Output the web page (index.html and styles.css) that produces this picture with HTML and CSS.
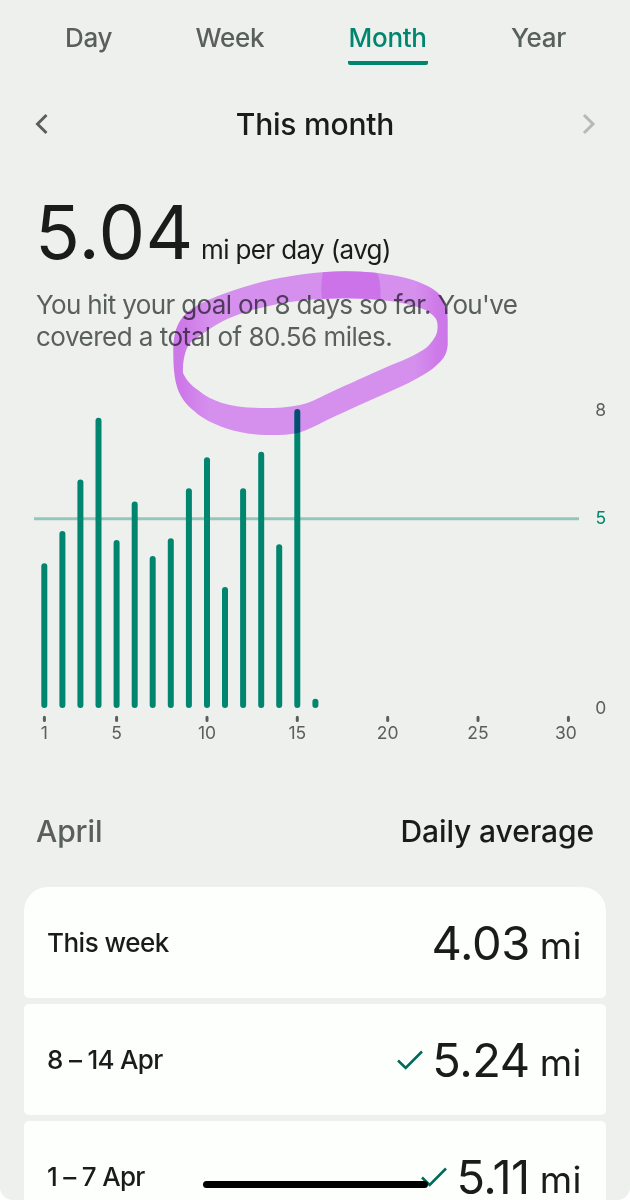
FILE: index.html
```html
<!DOCTYPE html>
<html lang="en">
    <head>
        <meta charset="utf-8">
        <title>Distance</title>
        <link rel="stylesheet" href="styles.css">
    </head>
    <body>
        <div class="page">
            <nav class="tabs">
                <a class="tab">Day</a>
                <a class="tab">Week</a>
                <a class="tab active">Month</a>
                <a class="tab">Year</a>
            </nav>

            <div class="period">
                <svg class="arrow" width="14" height="22" viewBox="0 0 14 22"><path d="M12.5 2 L3.5 11 L12.5 20"/></svg>
                <h1 class="period-title">This month</h1>
                <svg class="arrow next" width="14" height="22" viewBox="0 0 14 22"><path d="M2 2 L11 11 L2 20"/></svg>
            </div>

            <div class="average">
                <span class="average-value">5.04</span>
                <span class="average-unit">mi per day (avg)</span>
            </div>
            <p class="summary">You hit your goal on 8 days so far. You've<br><span class="second">covered a total of 80.56 miles.</span></p>

            <svg class="chart" width="630" height="360" viewBox="0 400 630 360">
                <path class="goal" d="M34 518.7H579"/>
                <g class="bars">
                    <path d="M44.3 566.3V705"/>
                    <path d="M62.4 534V705"/>
                    <path d="M80.4 482.5V705"/>
                    <path d="M98.5 420.7V705"/>
                    <path d="M116.6 543V705"/>
                    <path d="M134.7 504.5V705"/>
                    <path d="M152.7 559V705"/>
                    <path d="M170.8 541.3V705"/>
                    <path d="M188.9 491.3V705"/>
                    <path d="M207 460.3V705"/>
                    <path d="M225 590V705"/>
                    <path d="M243.1 491.3V705"/>
                    <path d="M261.2 454.7V705"/>
                    <path d="M279.2 547.3V705"/>
                    <path d="M297.3 412V705"/>
                    <path d="M315.4 701.7V705"/>
                </g>
                <path class="ticks" d="M44.4 717.3v3.2M116.6 717.3v3.2M207 717.3v3.2M297.3 717.3v3.2M387.7 717.3v3.2M478 717.3v3.2M568.4 717.3v3.2"/>
                <g class="labels">
                    <text x="44.3" y="738.7">1</text>
                    <text x="116.6" y="738.7">5</text>
                    <text x="207" y="738.7">10</text>
                    <text x="297.3" y="738.7">15</text>
                    <text x="387.7" y="738.7">20</text>
                    <text x="478" y="738.7">25</text>
                    <text x="566" y="738.7">30</text>
                    <text x="600.7" y="415.5">8</text>
                    <text x="600.7" y="524" class="goal-label">5</text>
                    <text x="600.7" y="713.7">0</text>
                </g>
            </svg>

            <div class="list-head">
                <h2 class="april">April</h2>
                <h2>Daily average</h2>
            </div>

            <div class="list">
                <div class="row">
                    <span class="row-label">This week</span>
                    <span class="row-value">4.03</span>
                    <span class="row-unit">mi</span>
                </div>
                <div class="row">
                    <span class="row-label dates">8 – 14 Apr</span>
                    <svg class="check" width="26" height="20" viewBox="0 0 26 20"><path d="M1 10.5 L8.7 18 L25 1.5"/></svg>
                    <span class="row-value">5.24</span>
                    <span class="row-unit">mi</span>
                </div>
                <div class="row">
                    <span class="row-label dates">1 – 7 Apr</span>
                    <svg class="check" width="26" height="20" viewBox="0 0 26 20"><path d="M1 10.5 L8.7 18 L25 1.5"/></svg>
                    <span class="row-value">5.11</span>
                    <span class="row-unit">mi</span>
                </div>
            </div>

            <!-- highlighter loop over the summary -->
            <svg class="marker" width="630" height="450" viewBox="0 0 630 450">
                <defs>
                    <linearGradient id="ink" gradientUnits="userSpaceOnUse" x1="173" y1="0" x2="448" y2="0">
                        <stop offset="0" stop-color="#db7dfa"/>
                        <stop offset="0.04" stop-color="#dd82fb"/>
                        <stop offset="0.13" stop-color="#e598ff"/>
                        <stop offset="0.88" stop-color="#e598ff"/>
                        <stop offset="0.96" stop-color="#dd82fb"/>
                        <stop offset="1" stop-color="#db7dfa"/>
                    </linearGradient>
                </defs>
                <path fill="url(#ink)" fill-rule="evenodd" d="M173.3 352 C173.3 338 175 327 182 318 C188 310 197 305 208 300 C240 286 282 275 325 272 C340 271 354 271 367 272 C384 273.5 400 276 413 280 C425 284 435 289 440 295 C446 303 448 312 447.7 322 V345 C447 352 445 357 440 362 C435 367 430 371 423 375 C416 379 409 383 400 387 C375 398 348 410 326 420.5 C316 425.5 308 430 298 433 C287 435 276 435.3 265 435 C250 434.7 237 432 225 428 C214 424 203 419 195 411.7 C185 404 179 395 176.5 385 C174 376 173.3 364 173.3 352Z
                M183 373 C182.5 364 184 355 187 348 C189 343 193 340 198 337 C208 330 219 322 232 317 C252 309 274 304 298 301 C321 298 345 297.5 367 299 C383 300 397 301.5 410 305 C418 307 425 309 430 313 C434 316 437 319 437.3 323 C438 328 437.5 333 435 337 C432 342 428 347 423 350 C411 358 395 363 380 370 C360 379 343 386.5 326 394.5 C317 399 309 403 300 405 C288 407.5 277 408 265 408 C250 408 235 407 222 403 C213 400 205 396 198 390 C192 386 186 380 183 373Z"/>
                <path class="overlap" d="M323 272.2 Q350 270 377 273 Q381 280 380.5 299.8 Q350 297.3 322 299 Q320 286 323 272.2Z"/>
            </svg>
            <div class="home-bar"></div>
        </div>
    </body>
</html>
```
FILE: styles.css
```css
html{
    background: white;
}
body{
    margin: 0;
    font-family: Inter, "Liberation Sans", sans-serif;
    color: #191c1a;
}
.page{
    position: relative;
    height: 1200px;
    overflow: hidden;
    background: #eef0ed;
    border-radius: 0 0 13px 13px;
}

.tabs{
    display: flex;
    justify-content: space-between;
    height: 66px;
    padding: 0 64px 0 65px;
    box-sizing: border-box;
    font-size: 26px;
    font-weight: 500;
    line-height: 75px;
    color: #59605c;
}
.tab{
    height: 66px;
    white-space: nowrap;
    letter-spacing: -0.3px;
}
.active{
    height: 61px;
    padding: 0 1px;
    color: #00866f;
    border-bottom: solid 4px #00866f;
    border-radius: 2px;
}

.period{
    display: flex;
    justify-content: space-between;
    align-items: center;
    height: 116px;
    padding: 0 34px;
}
.period-title{
    margin: 0;
    font-size: 30px;
    font-weight: 500;
    letter-spacing: -0.2px;
}
.arrow{
    fill: none;
    stroke: #59605c;
    stroke-width: 3;
}
.next{
    stroke: #b6b9b6;
}

.average{
    display: flex;
    align-items: baseline;
    height: 107px;
    padding-left: 35px;
    line-height: 100px;
    white-space: nowrap;
}
.average-value{
    width: 166px;
    font-size: 74px;
    letter-spacing: 0.5px;
}
.average-unit{
    font-size: 26px;
    line-height: 32px;
    letter-spacing: -0.63px;
}
.summary{
    height: 111px;
    margin: 0;
    padding-left: 36px;
    font-size: 26px;
    line-height: 32px;
    letter-spacing: -0.64px;
    color: #59605c;
    white-space: nowrap;
}
.second{
    letter-spacing: -0.51px;
}

.chart{
    display: block;
    overflow: visible;
}
.bars{
    stroke: #00866f;
    stroke-width: 6;
    stroke-linecap: round;
}
.goal{
    stroke: #94c7bc;
    stroke-width: 3;
}
.ticks{
    stroke: #59605c;
    stroke-width: 3;
    stroke-linecap: round;
}
.labels{
    font-size: 17.5px;
    fill: #59605c;
    text-anchor: middle;
}
.goal-label{
    fill: #00866f;
}

.list-head{
    display: flex;
    justify-content: space-between;
    height: 127px;
    padding: 0 36px;
    line-height: 143px;
}
.list-head h2{
    margin: 0;
    font-size: 30px;
    font-weight: 500;
    letter-spacing: -0.1px;
}
.list-head .april{
    color: #59605c;
}

.list{
    display: flex;
    flex-direction: column;
    gap: 6px;
    padding: 0 24px;
}
.row{
    display: flex;
    align-items: center;
    height: 111px;
    padding: 0 24px 0 23px;
    background: #fcfffb;
    border-radius: 5px;
    white-space: nowrap;
}
.row:first-child{
    border-radius: 24px 24px 5px 5px;
}
.row-label{
    flex: 1;
    font-size: 26px;
    font-weight: 500;
    letter-spacing: -0.5px;
}
.dates{
    letter-spacing: -0.7px;
}
.row-value{
    margin-left: 9px;
    padding-bottom: 1px;
    font-size: 47px;
    line-height: 1;
    letter-spacing: -0.4px;
}
.row-unit{
    margin-left: 10px;
    padding-top: 5px;
    font-size: 37px;
    line-height: 1;
    letter-spacing: 0.4px;
}
.check{
    fill: none;
    stroke: #006b59;
    stroke-width: 2.6;
}

.marker{
    position: absolute;
    top: 0;
    left: 0;
    mix-blend-mode: multiply;
}
.overlap{
    fill: #d873fa;
    opacity: 0.8;
}
.home-bar{
    position: absolute;
    top: 1181px;
    left: 203px;
    width: 225px;
    height: 7px;
    border-radius: 4px;
    background: black;
}
```
